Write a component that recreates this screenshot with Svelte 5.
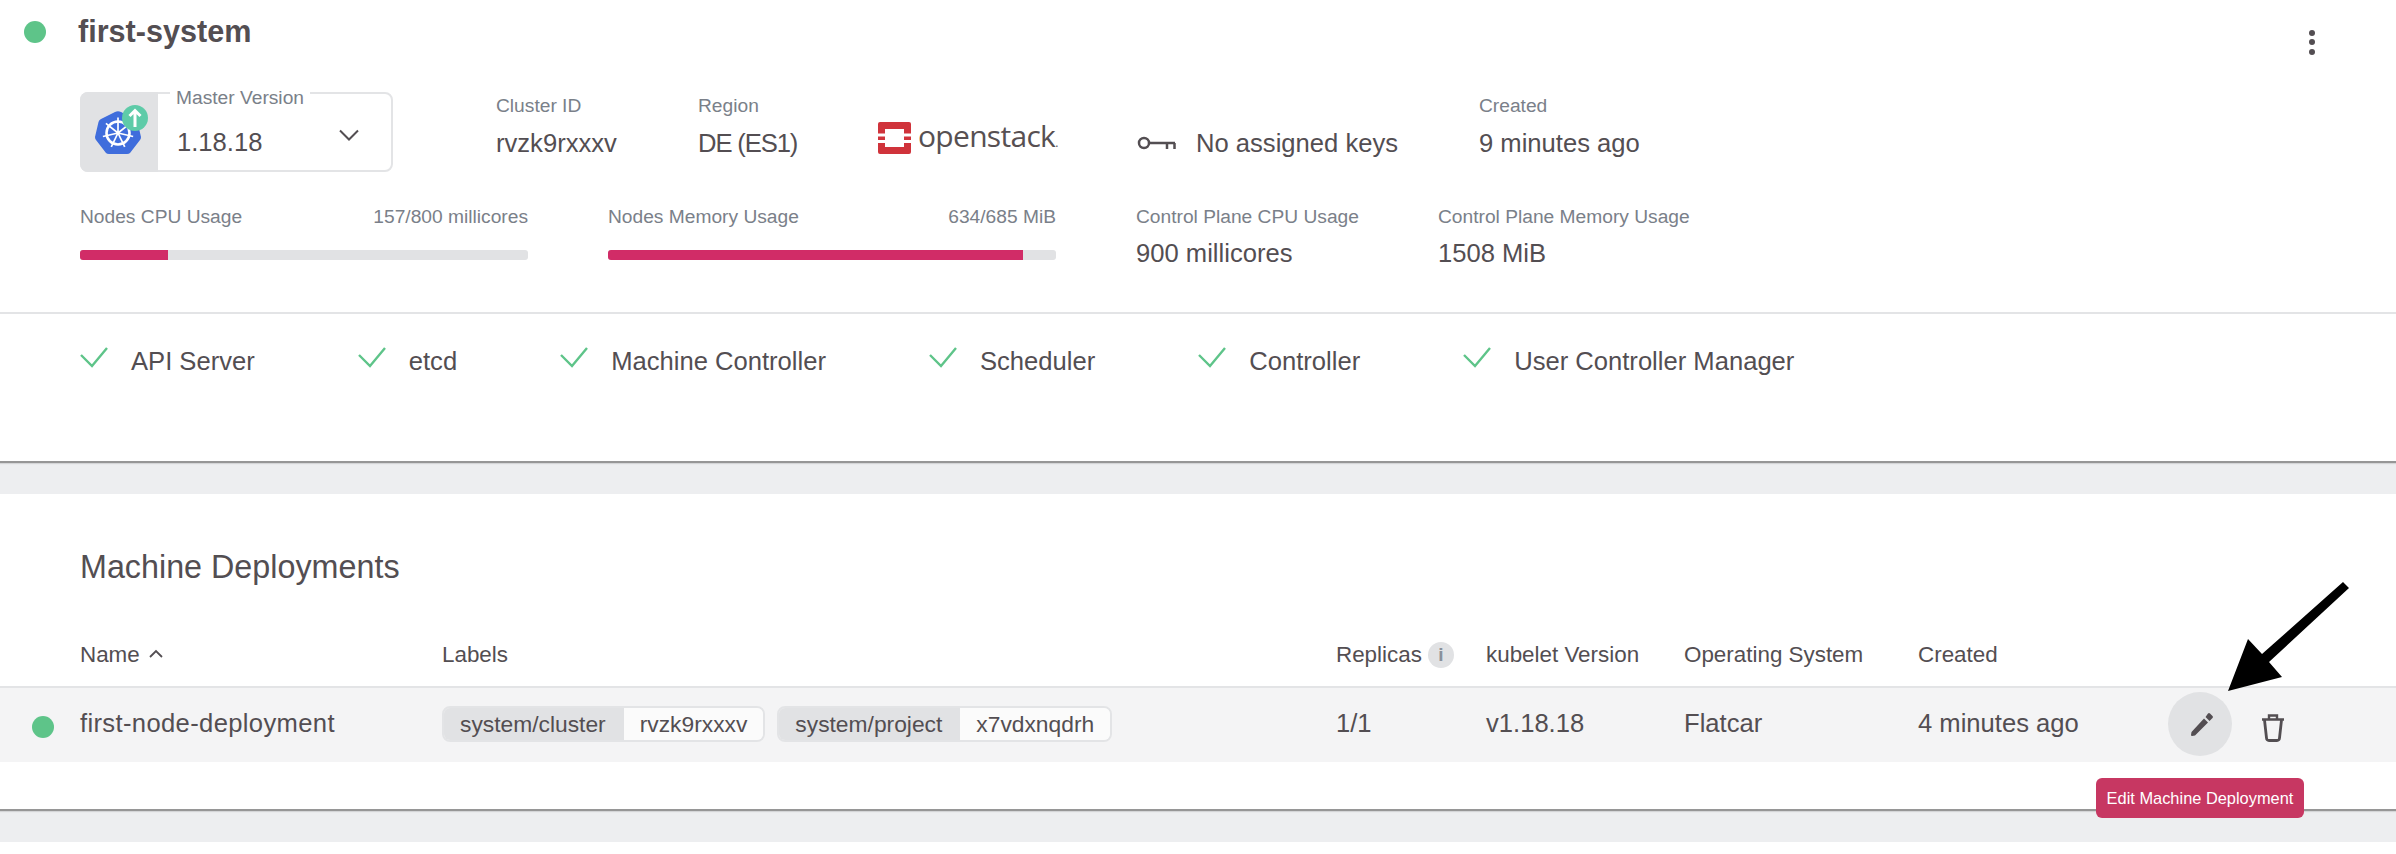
<script lang="ts">
  const usage = [
    { label: 'Nodes CPU Usage', value: '157/800 millicores', pct: 19.6 },
    { label: 'Nodes Memory Usage', value: '634/685 MiB', pct: 92.6 }
  ];
  const controlPlane = [
    { label: 'Control Plane CPU Usage', value: '900 millicores' },
    { label: 'Control Plane Memory Usage', value: '1508 MiB' }
  ];
  const health = ['API Server', 'etcd', 'Machine Controller', 'Scheduler', 'Controller', 'User Controller Manager'];
  const labels = [
    { key: 'system/cluster', value: 'rvzk9rxxxv' },
    { key: 'system/project', value: 'x7vdxnqdrh' }
  ];
  const spokes = [0, 51.4, 102.9, 154.3, 205.7, 257.1, 308.6];
</script>

<div class="page">
  <!-- Cluster card -->
  <section class="card cluster">
    <header class="cluster-header">
      <span class="dot"></span>
      <h1>first-system</h1>
      <button class="menu" aria-label="More"><i></i><i></i><i></i></button>
    </header>

    <div class="info-row">
      <div class="version-wrap">
        <div class="version">
          <div class="version-icon">
            <svg width="58" height="58" viewBox="0 0 58 58" aria-hidden="true">
              <path d="M21 9 L7 16 Q5 17 4.500 19 L1 34 Q1 36 2 37 L12 50 Q13 51 15 51 L33 51 Q35 51 36 50 L46 37 Q47 36 47 34 L43.500 19 Q43 17 41 16 L27 9 Q24 7.500 21 9Z" fill="#3f6ddc"/>
              <g fill="none" stroke="#fff">
                <circle cx="24" cy="30" r="11.500" stroke-width="2.600"/>
                <circle cx="24" cy="30" r="2" fill="#fff" stroke="none"/>
                {#each spokes as a}
                  <line x1="24" y1="30" x2="24" y2="14.500" stroke-width="1.700" transform="rotate({a} 24 30)"/>
                {/each}
              </g>
              <circle cx="41" cy="15" r="13" fill="#5ecba8"/>
              <path d="M41 24 V8 M35.500 13 L41 7.500 L46.500 13" fill="none" stroke="#fff" stroke-width="3"/>
            </svg>
          </div>
          <div class="version-value">1.18.18</div>
          <svg class="chevron" width="22" height="12" viewBox="0 0 22 12" aria-hidden="true">
            <path d="M2 1.500 L11 10.500 L20 1.500" fill="none" stroke="#534e52" stroke-width="2"/>
          </svg>
          <span class="legend">Master Version</span>
        </div>
      </div>

      <div class="field">
        <span class="label">Cluster ID</span>
        <span class="value">rvzk9rxxxv</span>
      </div>
      <div class="field">
        <span class="label">Region</span>
        <span class="value region">DE (ES1)</span>
      </div>
      <div class="logo">
        <svg width="33" height="32" viewBox="0 0 33 32" aria-hidden="true">
          <rect width="33" height="32" rx="2" fill="#d0333b"/>
          <rect x="7" y="7" width="19" height="18" fill="#fff"/>
          <rect y="11.500" width="7" height="3" fill="#fff"/>
          <rect y="18" width="7" height="3" fill="#fff"/>
          <rect x="26" y="11.500" width="7" height="3" fill="#fff"/>
          <rect x="26" y="18" width="7" height="3" fill="#fff"/>
        </svg>
        <span class="logo-text">openstack<small>.</small></span>
      </div>
      <div class="keys">
        <svg width="39" height="16" viewBox="0 0 39 16" aria-hidden="true">
          <circle cx="7" cy="7" r="5" fill="none" stroke="#534e52" stroke-width="2.500"/>
          <path d="M12 7 H38 M30 7 V13 M37.500 7 V13" fill="none" stroke="#534e52" stroke-width="2.500"/>
        </svg>
        <span>No assigned keys</span>
      </div>
      <div class="field">
        <span class="label">Created</span>
        <span class="value">9 minutes ago</span>
      </div>
    </div>

    <div class="usage-row">
      {#each usage as u}
        <div class="usage">
          <div class="usage-head">
            <span class="label">{u.label}</span>
            <span class="label">{u.value}</span>
          </div>
          <div class="bar"><div class="bar-fill" style="width: {u.pct}%"></div></div>
        </div>
      {/each}
      {#each controlPlane as c}
        <div class="field">
          <span class="label">{c.label}</span>
          <span class="value tight">{c.value}</span>
        </div>
      {/each}
    </div>

    <div class="health-row">
      {#each health as h}
        <div class="health">
          <svg width="28" height="21" viewBox="0 0 28 21" aria-hidden="true">
            <path d="M1 8 L12 19 L27 1" fill="none" stroke="#5ec489" stroke-width="2.400"/>
          </svg>
          <span>{h}</span>
        </div>
      {/each}
    </div>
  </section>

  <!-- Machine deployments card -->
  <section class="card deployments">
    <h2>Machine Deployments</h2>

    <div class="table-head grid">
      <span></span>
      <span class="sort">Name
        <svg width="16" height="10" viewBox="0 0 16 10" aria-hidden="true">
          <path d="M2 8 L8 2 L14 8" fill="none" stroke="#534e52" stroke-width="1.800"/>
        </svg>
      </span>
      <span>Labels</span>
      <span class="replicas">Replicas <i class="info">i</i></span>
      <span>kubelet Version</span>
      <span>Operating System</span>
      <span>Created</span>
      <span></span>
    </div>

    <div class="table-row grid">
      <span class="dot row-dot"></span>
      <span class="name">first-node-deployment</span>
      <span class="chips">
        {#each labels as l}
          <span class="chip"><b>{l.key}</b><em>{l.value}</em></span>
        {/each}
      </span>
      <span>1/1</span>
      <span>v1.18.18</span>
      <span>Flatcar</span>
      <span>4 minutes ago</span>
      <span class="actions">
        <button class="edit" aria-label="Edit">
          <svg width="26" height="26" viewBox="0 0 26 26" aria-hidden="true">
            <path d="M2.500 21 L2 24 Q2 25 3 25 L6 24.500 L19 11.500 L15 7.500 Z M16.500 6 L20.500 10 L23.500 7 Q24.500 6 23.500 5 L21 2.500 Q20 1.500 19 2.500 Z" fill="#534e52"/>
          </svg>
        </button>
        <button class="trash" aria-label="Delete">
          <svg width="24" height="29" viewBox="0 0 24 29" aria-hidden="true">
            <path d="M1 6.500 H23 M8 6 V2.500 H16 V6" fill="none" stroke="#534e52" stroke-width="2.400"/>
            <path d="M3.500 7 L5.500 25 Q5.700 27.500 8 27.500 H16 Q18.300 27.500 18.500 25 L20.500 7" fill="none" stroke="#534e52" stroke-width="2.800"/>
          </svg>
        </button>
        <span class="tooltip">Edit Machine Deployment</span>
      </span>
    </div>
  </section>

  <!-- Annotation arrow laid over the screenshot -->
  <svg class="arrow" width="135" height="115" viewBox="0 0 135 115" aria-hidden="true">
    <path d="M125 2 L131 8 L51 82 L64 97 L10 111 L30 59 L44 74 Z" fill="#000"/>
  </svg>
</div>

<style>
  :global(body) {
    margin: 0;
    background: #fff;
    font-family: "Liberation Sans", Arial, sans-serif;
    color: #534e52;
  }

  .page {
    position: relative;
    width: 2396px;
    height: 842px;
    background: #edeef0;
  }

  .card {
    background: #fff;
    border-bottom: 2px solid #969696;
    box-sizing: border-box;
    box-shadow: 0 1px 1px rgba(0, 0, 0, 0.1);
  }

  .dot {
    display: block;
    width: 22px;
    height: 22px;
    border-radius: 50%;
    background: #5ec489;
    flex-shrink: 0;
  }

  /* Cluster card */

  .cluster {
    height: 463px;
    margin-bottom: 31px;
    display: flex;
    flex-direction: column;
  }

  .cluster-header {
    display: flex;
    align-items: center;
    height: 64px;
    padding-left: 24px;
    margin-bottom: 28px;
  }

  h1 {
    margin: -2px 0 0 32px;
    font-size: 30.6px;
    font-weight: 700;
    line-height: 38px;
    color: #534e52;
  }

  .menu {
    display: flex;
    flex-direction: column;
    gap: 3.500px;
    margin: 20px 81px 0 auto;
    padding: 0;
    border: 0;
    background: none;
  }

  .menu i {
    display: block;
    width: 6px;
    height: 6px;
    border-radius: 50%;
    background: #534e52;
  }

  .info-row {
    display: grid;
    grid-template-columns: 416px 202px 180px 259px 342px 1fr;
    height: 80px;
    padding-left: 80px;
  }

  .version-wrap {
    width: 313px;
  }

  .version {
    position: relative;
    display: flex;
    align-items: center;
    height: 80px;
    box-sizing: border-box;
    border: 2px solid #e3e4e6;
    border-radius: 8px;
  }

  .version-icon {
    display: flex;
    align-items: center;
    justify-content: center;
    width: 78px;
    height: 80px;
    margin: -2px 0 -2px -2px;
    padding-left: 8px;
    box-sizing: border-box;
    background: #e1e2e4;
    border-radius: 8px 0 0 8px;
  }

  .version-value {
    margin: 20px 0 0 19px;
    font-size: 25.6px;
  }

  .chevron {
    margin: 6px 0 0 76px;
  }

  .legend {
    position: absolute;
    top: -7px;
    left: 88px;
    padding: 0 6px;
    background: #fff;
    font-size: 19.200px;
    line-height: 22px;
    color: #7a8089;
  }

  .field {
    display: flex;
    flex-direction: column;
    padding-top: 1px;
  }

  .label {
    font-size: 19.200px;
    line-height: 26px;
    color: #7a8089;
    white-space: nowrap;
  }

  .value {
    margin-top: 11px;
    font-size: 25.6px;
    line-height: 26px;
    white-space: nowrap;
  }

  .value.region {
    letter-spacing: -1.1px;
  }

  .usage-row .field {
    padding-top: 0;
  }

  .value.tight {
    margin-top: 10px;
  }

  .logo {
    display: flex;
    align-items: center;
    gap: 7px;
    height: 32px;
    margin-top: 30px;
  }

  .logo-text {
    margin-top: -5px;
    font-family: "Open Sans", sans-serif;
    font-size: 30px;
    font-weight: 500;
    letter-spacing: -0.7px;
    color: #575052;
  }

  .logo-text small {
    font-size: 12px;
  }

  .keys {
    display: flex;
    align-items: center;
    gap: 20px;
    height: 26px;
    margin-top: 38px;
    font-size: 25.6px;
    white-space: nowrap;
  }

  .keys svg {
    margin-top: 2px;
  }

  .usage-row {
    display: grid;
    grid-template-columns: 528px 528px 302px 1fr;
    height: 108px;
    margin-top: 32px;
    padding-left: 80px;
    box-sizing: border-box;
  }

  .usage {
    width: 448px;
  }

  .usage-head {
    display: flex;
    justify-content: space-between;
  }

  .bar {
    height: 10px;
    margin-top: 20px;
    border-radius: 3px;
    overflow: hidden;
    background: #e1e2e4;
  }

  .bar-fill {
    height: 100%;
    background: #d12c67;
  }

  .health-row {
    display: flex;
    gap: 103px;
    padding: 30px 0 0 80px;
    border-top: 2px solid #e3e4e6;
  }

  .health {
    display: flex;
    align-items: center;
    gap: 23px;
    height: 34px;
    font-size: 25.6px;
    white-space: nowrap;
  }

  .health svg {
    margin-top: -7px;
  }

  /* Machine deployments card */

  .deployments {
    height: 317px;
  }

  h2 {
    margin: 0;
    padding: 53px 0 0 80px;
    font-size: 32.3px;
    font-weight: 400;
    line-height: 40px;
    color: #534e52;
  }

  .grid {
    display: grid;
    grid-template-columns: 80px 362px 894px 150px 198px 234px 234px 1fr;
    align-items: center;
    white-space: nowrap;
  }

  .table-head {
    height: 34px;
    margin-top: 51px;
    margin-bottom: 14px;
    font-size: 22.4px;
  }

  .sort svg {
    margin-left: 2px;
    vertical-align: 3px;
  }

  .replicas {
    display: flex;
    align-items: center;
    gap: 6px;
  }

  .info {
    display: flex;
    align-items: center;
    justify-content: center;
    width: 26px;
    height: 26px;
    border-radius: 50%;
    background: #e1e2e4;
    color: #8a909a;
    font-size: 19px;
    font-style: normal;
    font-weight: 700;
  }

  .table-row {
    position: relative;
    height: 76px;
    padding-bottom: 3px;
    box-sizing: border-box;
    background: #f4f4f5;
    border-top: 2px solid #e3e4e6;
    font-size: 25.6px;
  }

  .name {
    letter-spacing: 0.35px;
  }

  .row-dot {
    margin: 6px 0 0 32px;
  }

  .chips {
    display: flex;
    gap: 12px;
  }

  .chip {
    display: flex;
    height: 36px;
    box-sizing: border-box;
    border: 2px solid #e3e4e6;
    border-radius: 8px;
    overflow: hidden;
    font-size: 22.8px;
    line-height: 32px;
  }

  .chip b {
    padding: 0 18px 0 16px;
    background: #e1e2e4;
    font-weight: 400;
  }

  .chip em {
    padding: 0 16px 0 16px;
    background: #fbfbfb;
    font-style: normal;
  }

  .actions {
    display: flex;
    align-items: center;
    gap: 29px;
    padding-left: 16px;
  }

  .actions button {
    display: flex;
    align-items: center;
    justify-content: center;
    padding: 0;
    border: 0;
    background: none;
  }

  .actions .edit {
    width: 64px;
    height: 64px;
    padding-left: 3px;
    border-radius: 50%;
    background: #e1e2e4;
  }

  .actions .trash {
    margin-top: 8px;
  }

  .tooltip {
    position: absolute;
    top: 90px;
    left: 2096px;
    width: 208px;
    height: 40px;
    border-radius: 6px;
    background: #c73762;
    color: #fff;
    font-size: 16.4px;
    line-height: 40px;
    text-align: center;
  }

  .arrow {
    position: absolute;
    top: 580px;
    left: 2218px;
  }
</style>
